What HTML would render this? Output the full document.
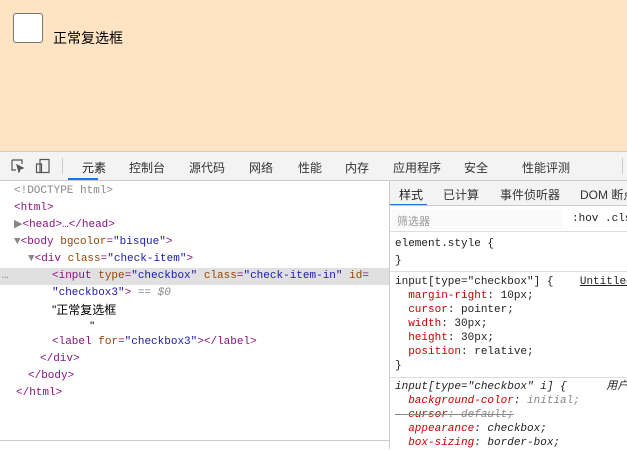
<!DOCTYPE html>
<html><head><meta charset="utf-8"><style>
*{margin:0;padding:0;box-sizing:border-box}
body{width:627px;height:449px;overflow:hidden;font-family:"Liberation Sans","Noto Sans CJK SC",sans-serif;background:#fff;position:relative}
.top{position:absolute;left:0;top:0;width:627px;height:151px;background:#ffe4c4}
.cb{position:absolute;left:13px;top:13px;width:30px;height:30px;border:1px solid #767676;border-radius:3px;background:#fff}
.lbl{position:absolute;left:53px;top:28px;font-size:14px;color:#000}
.tb{position:absolute;left:0;top:151px;width:627px;height:30px;background:#f3f3f3;border-top:1px solid #ccc;border-bottom:1px solid #ccc;font-size:12px;color:#333}
.tb span{position:absolute;top:7px}
.ul{position:absolute;left:68px;top:26px;width:30px;height:2px;background:#1a73e8}
.left{position:absolute;left:0;top:181px;width:389px;height:259px;font-family:"Liberation Mono",monospace;font-size:11px;color:#881280}
.left div{position:absolute;white-space:pre;height:17px;line-height:17px}
.a{color:#994500}.v{color:#1a1aa6}.g{color:#888}.k{color:#000;font-family:"Liberation Sans","Noto Sans CJK SC",sans-serif;font-size:12px}
.hl{position:absolute;left:0;top:87px;width:389px;height:33px;background:#e0e0e0}
.sep{position:absolute;left:389px;top:181px;width:1px;height:268px;background:#ccc}
.bot{position:absolute;left:0;top:440px;width:389px;height:9px;border-top:1px solid #ccc;background:#fff}
.right{position:absolute;left:390px;top:181px;width:237px;height:268px;font-family:"Liberation Mono",monospace;font-size:11px;color:#222}
.right .r{position:absolute;white-space:pre;left:5px;line-height:14px}
.rt{position:absolute;top:0;left:0;width:237px;height:25px;background:#f3f3f3;border-bottom:1px solid #ccc;font-family:"Liberation Sans","Noto Sans CJK SC",sans-serif;font-size:12px;color:#333;white-space:nowrap;overflow:hidden}
.rt span{position:absolute;top:5px}
.p{color:#c80000}.hr{position:absolute;left:0;width:237px;height:1px;background:#ddd}
</style></head><body>
<div class="top"><div class="cb"></div><div class="lbl">正常复选框</div></div>
<div class="tb">
<svg style="position:absolute;left:11px;top:7px" width="14" height="14" viewBox="0 0 14 14" fill="none" stroke="#555" stroke-width="1.2"><path d="M1 1h10v4M1 1v10h4"/><path d="M6 6l6 3-3 1-1 3z" fill="#555"/></svg>
<svg style="position:absolute;left:35px;top:6px" width="16" height="16" viewBox="0 0 16 16" fill="none" stroke="#555" stroke-width="1.2"><rect x="5" y="1.5" width="9" height="13"/><rect x="1.5" y="6" width="5" height="8.5"/></svg>
<div style="position:absolute;left:62px;top:6px;width:1px;height:16px;background:#ccc"></div>
<span style="left:82px;color:#222">元素</span><span style="left:129px">控制台</span><span style="left:189px">源代码</span><span style="left:249px">网络</span><span style="left:298px">性能</span><span style="left:345px">内存</span><span style="left:393px">应用程序</span><span style="left:464px">安全</span><span style="left:522px">性能评测</span>
<div style="position:absolute;left:622px;top:6px;width:1px;height:16px;background:#ccc"></div>
<div class="ul"></div></div>
<div class="left">
<div class="hl"></div>
<div style="left:14px;top:2px" class="g">&lt;!DOCTYPE html&gt;</div>
<div style="left:14px;top:19px">&lt;html&gt;</div>
<div style="left:14px;top:36px"><span class="g">▶</span>&lt;head&gt;…&lt;/head&gt;</div>
<div style="left:14px;top:53px"><span class="g">▼</span>&lt;body <span class="a">bgcolor</span>=<span class="v">"bisque"</span>&gt;</div>
<div style="left:28px;top:70px"><span class="g">▼</span>&lt;div <span class="a">class</span>=<span class="v">"check-item"</span>&gt;</div>
<div style="left:2px;top:87px" class="g">…</div>
<div style="left:52px;top:87px">&lt;input <span class="a">type</span>=<span class="v">"checkbox"</span> <span class="a">class</span>=<span class="v">"check-item-in"</span> <span class="a">id</span>=</div>
<div style="left:52px;top:104px"><span class="v">"checkbox3"</span>&gt; <span class="g"><i>== $0</i></span></div>
<div style="left:52px;top:121px" class="k">"正常复选框</div>
<div style="left:90px;top:137px" class="k">"</div>
<div style="left:52px;top:153px">&lt;label <span class="a">for</span>=<span class="v">"checkbox3"</span>&gt;&lt;/label&gt;</div>
<div style="left:40px;top:170px">&lt;/div&gt;</div>
<div style="left:28px;top:187px">&lt;/body&gt;</div>
<div style="left:16px;top:204px">&lt;/html&gt;</div>
</div>
<div class="sep"></div>
<div class="bot"></div>
<div class="right">
<div class="rt"><span style="left:9px;color:#222">样式</span><span style="left:53px">已计算</span><span style="left:110px">事件侦听器</span><span style="left:190px">DOM 断点</span><div style="position:absolute;left:0;top:23px;width:37px;height:2px;background:#1a73e8"></div></div>
<div style="position:absolute;left:0;top:26px;width:237px;height:25px;background:#fff;border-bottom:1px solid #ddd;white-space:nowrap;overflow:hidden"><div style="position:absolute;left:2px;top:3px;width:170px;height:19px;background:#fafafa"></div><span style="position:absolute;left:7px;top:6px;font-family:'Liberation Sans','Noto Sans CJK SC',sans-serif;font-size:11px;color:#999">筛选器</span><span style="position:absolute;left:182px;top:6px;white-space:nowrap">:hov .cls</span></div>
<div class="r" style="top:56px">element.style {</div>
<div class="r" style="top:73px">}</div>
<div class="hr" style="top:90px"></div>
<div class="r" style="top:94px">input[type="checkbox"] {    <u>Untitled</u></div>
<div class="r" style="top:108px">  <span class="p">margin-right</span>: 10px;</div>
<div class="r" style="top:122px">  <span class="p">cursor</span>: pointer;</div>
<div class="r" style="top:136px">  <span class="p">width</span>: 30px;</div>
<div class="r" style="top:150px">  <span class="p">height</span>: 30px;</div>
<div class="r" style="top:164px">  <span class="p">position</span>: relative;</div>
<div class="r" style="top:178px">}</div>
<div class="hr" style="top:196px"></div>
<div class="r" style="top:199px;font-style:italic">input[type="checkbox" i] {      用户</div>
<div class="r" style="top:213px;font-style:italic">  <span class="p">background-color</span>: <span style="color:#888">initial;</span></div>
<div class="r" style="top:227px;font-style:italic;text-decoration:line-through;color:#888">  <span class="p">cursor</span>: default;</div>
<div class="r" style="top:241px;font-style:italic">  <span class="p">appearance</span>: checkbox;</div>
<div class="r" style="top:255px;font-style:italic">  <span class="p">box-sizing</span>: border-box;</div>
</div>
</body></html>
